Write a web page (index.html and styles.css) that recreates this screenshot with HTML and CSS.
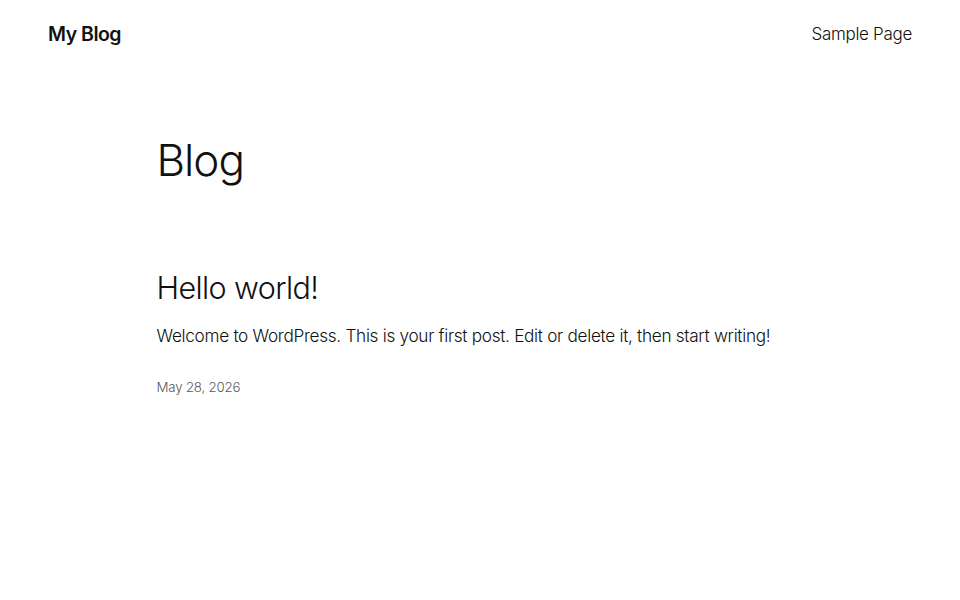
FILE: index.html
```html
<!DOCTYPE html>
<html lang="en">
<head>
<meta charset="utf-8">
<title>Blog – My Blog</title>
<link rel="stylesheet" href="styles.css">
</head>
<body>
<header class="site-header">
  <a class="site-title" href="#">My Blog</a>
  <nav class="site-nav"><a href="#">Sample Page</a></nav>
</header>
<main class="content">
  <h1 class="page-title">Blog</h1>
  <article class="post">
    <h2 class="post-title">Hello world!</h2>
    <p class="post-excerpt">Welcome to WordPress. This is your first post. Edit or delete it, then start writing!</p>
    <div class="post-date">May 28, 2026</div>
  </article>
</main>
</body>
</html>
```
FILE: styles.css
```css
html, body {
  margin: 0;
  padding: 0;
  background: #ffffff;
}
body {
  font-family: Inter, "Noto Sans", sans-serif;
  color: #111111;
  -webkit-font-smoothing: antialiased;
}
a {
  color: inherit;
  text-decoration: none;
}
.site-header {
  display: flex;
  justify-content: space-between;
  align-items: center;
  padding: 20px 48px 0;
  height: 28px;
}
.site-title {
  font-size: 19.5px;
  font-weight: 600;
  letter-spacing: -0.5px;
}
.site-nav {
  font-size: 17px;
  font-weight: 300;
  letter-spacing: -0.3px;
}
.content {
  width: 645px;
  margin: 0 auto;
  padding-top: 86px;
}
.page-title {
  margin: 0 0 0 -1px;
  font-size: 44px;
  font-weight: 300;
  line-height: 1.2;
  letter-spacing: -1px;
}
.post {
  margin-top: 83px;
}
.post-title {
  margin: 0 0 0 -1px;
  font-size: 30.5px;
  font-weight: 300;
  line-height: 1.2;
  letter-spacing: -0.6px;
}
.post-excerpt {
  margin: 17px 0 0 -1px;
  font-size: 17.2px;
  font-weight: 300;
  line-height: 1.5;
  letter-spacing: -0.3px;
}
.post-date {
  margin-top: 30px;
  margin-left: -1px;
  font-size: 13.3px;
  font-weight: 300;
  color: #5a5a5a;
  letter-spacing: -0.2px;
}
```
